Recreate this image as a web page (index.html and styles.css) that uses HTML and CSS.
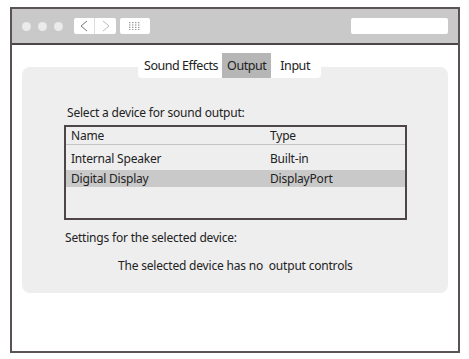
FILE: index.html
```html
<!DOCTYPE html>
<html lang="en">
<head>
    <meta charset="UTF-8">
    <meta name="viewport" content="width=device-width, initial-scale=1.0">
    <title>Sound Preferences</title>
    <link rel="stylesheet" href="styles.css">
</head>
<body>
    <div class="window">
        <div class="titlebar">
            <div class="dots">
                <span class="dot"></span>
                <span class="dot"></span>
                <span class="dot"></span>
            </div>
            <div class="nav">
                <span class="nav-btn back">
                    <svg width="10" height="12" viewBox="0 0 10 12"><path d="M8 1 L2 6 L8 11" fill="none" stroke="#777" stroke-width="1"/></svg>
                </span>
                <span class="nav-btn fwd">
                    <svg width="10" height="12" viewBox="0 0 10 12"><path d="M2 1 L8 6 L2 11" fill="none" stroke="#bbb" stroke-width="1"/></svg>
                </span>
            </div>
            <span class="grid-btn">
                <svg width="12" height="8" viewBox="0 0 12 8" fill="#999">
                    <rect x="0" y="0" width="1.4" height="1.2"/><rect x="3" y="0" width="1.4" height="1.2"/><rect x="6" y="0" width="1.4" height="1.2"/><rect x="9" y="0" width="1.4" height="1.2"/>
                    <rect x="0" y="2.4" width="1.4" height="1.2"/><rect x="3" y="2.4" width="1.4" height="1.2"/><rect x="6" y="2.4" width="1.4" height="1.2"/><rect x="9" y="2.4" width="1.4" height="1.2"/>
                    <rect x="0" y="4.8" width="1.4" height="1.2"/><rect x="3" y="4.8" width="1.4" height="1.2"/><rect x="6" y="4.8" width="1.4" height="1.2"/><rect x="9" y="4.8" width="1.4" height="1.2"/>
                    <rect x="0" y="7" width="1.4" height="1"/><rect x="3" y="7" width="1.4" height="1"/><rect x="6" y="7" width="1.4" height="1"/><rect x="9" y="7" width="1.4" height="1"/>
                </svg>
            </span>
            <span class="search"></span>
        </div>
        <div class="content">
            <div class="tabs">
                <span class="tab">Sound Effects</span>
                <span class="tab active">Output</span>
                <span class="tab">Input</span>
            </div>
            <div class="panel">
                <p class="label">Select a device for sound output:</p>
                <div class="devices">
                    <div class="row head">
                        <span class="col-name">Name</span>
                        <span class="col-type">Type</span>
                    </div>
                    <div class="rows">
                        <div class="row">
                            <span class="col-name">Internal Speaker</span>
                            <span class="col-type">Built-in</span>
                        </div>
                        <div class="row selected">
                            <span class="col-name">Digital Display</span>
                            <span class="col-type">DisplayPort</span>
                        </div>
                    </div>
                </div>
                <p class="label settings">Settings for the selected device:</p>
                <p class="note">The selected device has no &nbsp;output controls</p>
            </div>
        </div>
    </div>
</body>
</html>
```

FILE: styles.css
```css
body {
    margin: 0;
    background-color: #ffffff;
    font-family: "Noto Sans", "Open Sans", sans-serif;
    color: #222222;
}

.window {
    margin: 7px 0 0 10px;
    width: 446px;
    height: 342px;
    border: 2px solid #5a5353;
    display: flex;
    flex-direction: column;
}

.titlebar {
    height: 34px;
    background-color: #c9c9c9;
    border-bottom: 2px solid #4e4646;
    display: flex;
    align-items: center;
    padding: 0 10px;
}

.dots {
    display: flex;
    gap: 7px;
}

.dot {
    width: 9px;
    height: 9px;
    border-radius: 50%;
    background-color: #ebebeb;
}

.nav {
    display: flex;
    margin-left: 11px;
    background-color: #ffffff;
    border-radius: 2px;
}

.nav-btn {
    width: 21px;
    height: 16px;
    display: flex;
    align-items: center;
    justify-content: center;
}

.nav-btn.back {
    border-right: 1px solid #dddddd;
    width: 20px;
}

.grid-btn {
    width: 30px;
    height: 16px;
    margin-left: 4px;
    background-color: #ffffff;
    border-radius: 2px;
    display: flex;
    align-items: center;
    justify-content: center;
}

.search {
    width: 97px;
    height: 16px;
    margin-left: auto;
    background-color: #ffffff;
    border-radius: 2px;
}

.content {
    padding: 8px 10px 0 10px;
}

.tabs {
    position: relative;
    z-index: 1;
    display: flex;
    width: fit-content;
    margin: 0 0 -11px 116px;
    background-color: #ffffff;
    border-radius: 4px;
    height: 25px;
    padding-left: 6px;
}

.tab {
    font-size: 12.5px;
    letter-spacing: -0.45px;
    line-height: 25px;
    padding-right: 4px;
}

.tab.active {
    background-color: #b6b6b6;
    padding: 0 5px 0 5px;
    margin-right: 9px;
}

.tab:last-child {
    padding-right: 11px;
}

.panel {
    background-color: #eeeeee;
    border-radius: 8px;
    height: 226px;
    padding: 0 41px 0 42px;
    box-sizing: border-box;
    display: flex;
    flex-direction: column;
    font-size: 12px;
    letter-spacing: -0.2px;
}

.label {
    margin: 38px 0 4px 3px;
    line-height: 16px;
}

.devices {
    border: 2px solid #4e4646;
    height: 95px;
    box-sizing: border-box;
}

.row {
    display: flex;
    height: 17px;
    line-height: 17px;
    padding-left: 5px;
}

.row.head {
    border-bottom: 1px solid #c4c4c4;
}

.rows {
    padding-top: 5px;
}

.row + .row {
    margin-top: 3px;
}

.row.selected {
    background-color: #c9c9c9;
}

.col-name {
    width: 199px;
}

.label.settings {
    margin: 10px 0 0 1px;
}

.note {
    margin: 12px 0 0 54px;
    line-height: 16px;
}
```
